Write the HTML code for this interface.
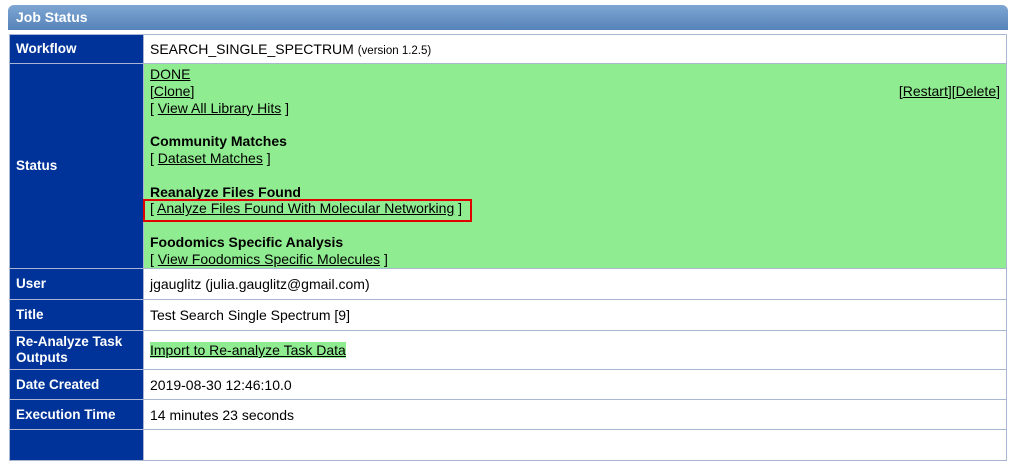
<!DOCTYPE html>
<html><head><style>
body{margin:0;background:#fff;font-family:"Liberation Sans",sans-serif;font-size:14px;color:#000;width:1014px;height:438px;overflow:hidden;position:relative}
.hdr{position:absolute;left:8px;top:5px;width:1000px;height:25px;background:linear-gradient(#7ea6d3,#5583b9);border-radius:6px 6px 0 0;color:#fff;font-weight:bold;font-size:14px;line-height:25px;text-indent:8px}
table{position:absolute;left:9px;top:34px;width:998px;border-collapse:collapse}
td{border:1px solid #a9b6d3;padding:0 0 0 6px;vertical-align:middle}
td.l{background:#003399;color:#fff;font-weight:bold;width:127px;font-size:13.5px;line-height:16px}
a{color:#000;text-decoration:underline}
.g{background:#90ec90}
.ln{height:16.8px;line-height:16.8px;white-space:nowrap}
b{font-weight:bold}
</style></head><body>
<div class="hdr">Job Status</div>
<table>
<tr style="height:29px"><td class="l">Workflow</td><td>SEARCH_SINGLE_SPECTRUM <span style="font-size:11.5px">(version 1.2.5)</span></td></tr>
<tr style="height:205px"><td class="l">Status</td><td class="g" style="position:relative;vertical-align:top;padding-top:2px;height:202px">
<div class="ln"><a>DONE</a></div>
<div class="ln">[<a>Clone</a>]<span style="position:absolute;right:6px">[<a>Restart</a>][<a>Delete</a>]</span></div>
<div class="ln">[ <a>View All Library Hits</a> ]</div>
<div class="ln"></div>
<div class="ln"><b>Community Matches</b></div>
<div class="ln">[ <a>Dataset Matches</a> ]</div>
<div class="ln"></div>
<div class="ln"><b>Reanalyze Files Found</b></div>
<div class="ln" style="position:relative">[ <a>Analyze Files Found With Molecular Networking</a> ]<div style="position:absolute;left:-7px;top:-1px;width:325px;height:19px;border:2px solid #e00000"></div></div>
<div class="ln"></div>
<div class="ln"><b>Foodomics Specific Analysis</b></div>
<div class="ln">[ <a>View Foodomics Specific Molecules</a> ]</div>
</td></tr>
<tr style="height:31px"><td class="l">User</td><td>jgauglitz (julia.gauglitz@gmail.com)</td></tr>
<tr style="height:31px"><td class="l">Title</td><td>Test Search Single Spectrum [9]</td></tr>
<tr style="height:39px"><td class="l">Re-Analyze Task Outputs</td><td><a style="background:#90ec90">Import to Re-analyze Task Data</a></td></tr>
<tr style="height:30px"><td class="l">Date Created</td><td>2019-08-30 12:46:10.0</td></tr>
<tr style="height:30px"><td class="l">Execution Time</td><td>14 minutes 23 seconds</td></tr>
<tr style="height:31px"><td class="l">&nbsp;</td><td></td></tr>
</table>
</body></html>
